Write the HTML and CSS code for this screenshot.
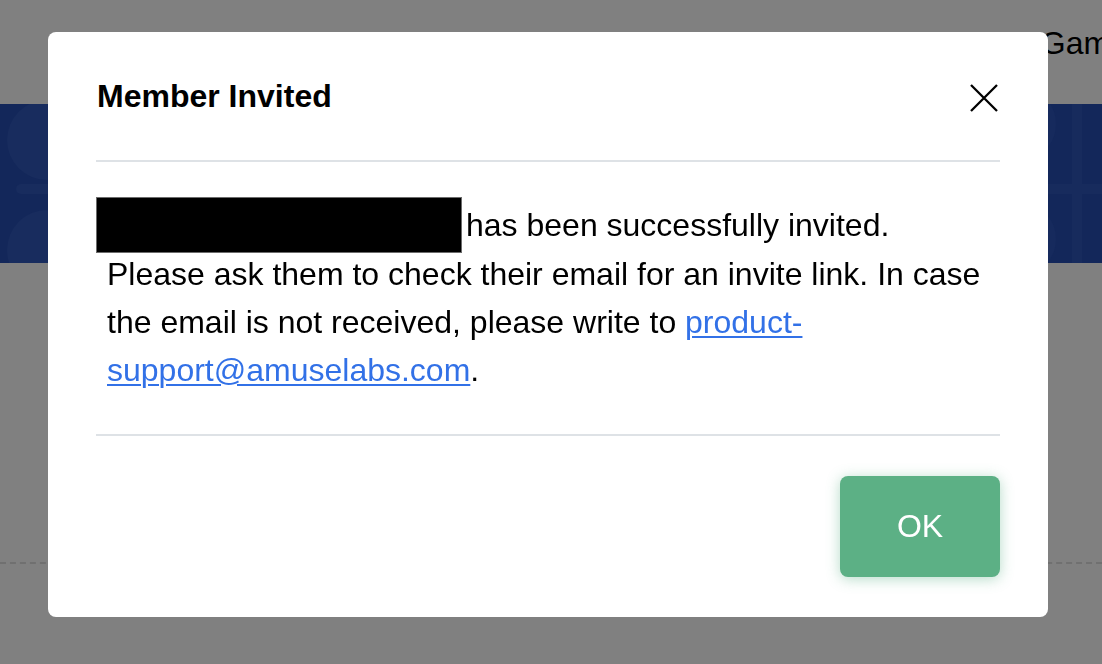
FILE: index.html
```html
<!DOCTYPE html>
<html lang="en">
<head>
<meta charset="utf-8">
<title>Member Invited</title>
<link rel="stylesheet" href="styles.css">
</head>
<body>
<div class="page">
  <div class="topnav">
    <span class="nav-item">Games</span>
  </div>
  <div class="banner">
    <span class="deco deco-c1"></span>
    <span class="deco deco-pill"></span>
    <span class="deco deco-c2"></span>
    <span class="deco deco-vbar"></span>
    <span class="deco deco-hbar"></span>
    <span class="deco deco-c3"></span>
    <span class="deco deco-c4"></span>
  </div>
  <div class="content">
    <div class="dashed"></div>
  </div>
</div>

<div class="backdrop">
  <div class="modal" role="dialog" aria-labelledby="modal-title">
    <div class="modal-header">
      <h2 class="modal-title" id="modal-title">Member Invited</h2>
      <button class="close-btn" aria-label="Close">
        <svg width="30" height="30" viewBox="0 0 30 30" aria-hidden="true">
          <path d="M2 2 L28 28 M28 2 L2 28" stroke="#000" stroke-width="2.3" stroke-linecap="butt" fill="none"/>
        </svg>
      </button>
    </div>
    <div class="modal-body">
      <div class="first-line">
        <span class="redacted"></span><span>has been successfully invited.</span>
      </div>
      <p class="message">Please ask them to check their email for an invite link. In case the email is not received, please write to <a href="#" class="mail-link">product-support@amuselabs.com</a>.</p>
    </div>
    <div class="modal-footer">
      <button class="ok-btn">OK</button>
    </div>
  </div>
</div>
</body>
</html>
```

FILE: styles.css
```css
html, body {
  margin: 0;
  padding: 0;
}

body {
  background: #808080;
  font-family: "Liberation Sans", Arial, Helvetica, sans-serif;
  color: #000;
  width: 1102px;
  height: 664px;
  overflow: hidden;
}

.page {
  display: flex;
  flex-direction: column;
}

.topnav {
  height: 104px;
  display: flex;
  justify-content: flex-end;
  white-space: nowrap;
}

.nav-item {
  font-size: 32px;
  line-height: 1;
  color: #000;
  margin-top: 27px;
  margin-right: -42px;
}

.banner {
  position: relative;
  height: 159px;
  background: #13275a;
  overflow: hidden;
}

.deco {
  position: absolute;
  background: #182c5e;
}

.deco-c1 {
  left: 7px;
  top: -4px;
  width: 80px;
  height: 80px;
  border-radius: 50%;
}

.deco-pill {
  left: 16px;
  top: 80px;
  width: 60px;
  height: 10px;
  border-radius: 5px;
}

.deco-c2 {
  left: 7px;
  top: 106px;
  width: 80px;
  height: 80px;
  border-radius: 50%;
}

.deco-vbar {
  left: 1072px;
  top: 0;
  width: 10px;
  height: 159px;
  background: #172b5d;
}

.deco-hbar {
  left: 1040px;
  top: 80px;
  width: 62px;
  height: 10px;
  background: #172b5d;
}

.deco-c3 {
  left: 1010px;
  top: -10px;
  width: 46px;
  height: 60px;
  border-radius: 50%;
  background: #162a5d;
}

.deco-c4 {
  left: 1010px;
  top: 105px;
  width: 46px;
  height: 60px;
  border-radius: 50%;
  background: #162a5d;
}

.content {
  height: 401px;
  padding-top: 299px;
  box-sizing: border-box;
}

.dashed {
  height: 0;
  border-top: 2px dashed #707070;
}

.backdrop {
  position: fixed;
  inset: 0;
  padding: 32px 0 0 48px;
}

.modal {
  width: 1000px;
  height: 585px;
  box-sizing: border-box;
  background: #fff;
  border-radius: 8px;
  padding: 0 48px;
  display: flex;
  flex-direction: column;
}

.modal-header {
  display: flex;
  align-items: center;
  justify-content: space-between;
  padding: 40px 0;
  border-bottom: 2px solid #dee2e6;
}

.modal-title {
  margin: 0;
  font-size: 32px;
  font-weight: 700;
  line-height: 48px;
  padding-left: 1px;
}

.close-btn {
  border: 0;
  background: none;
  padding: 0;
  width: 30px;
  height: 30px;
  margin-top: 4px;
  margin-right: 1px;
  display: flex;
  cursor: pointer;
}

.modal-body {
  padding: 35px 0 40px;
  font-size: 32px;
  line-height: 48px;
}

.first-line {
  display: flex;
  align-items: center;
  height: 56px;
  margin-bottom: -3px;
  white-space: nowrap;
}

.redacted {
  display: inline-block;
  width: 364px;
  height: 54px;
  background: #000;
  border: 1px solid #6c6c6c;
  margin-right: 4px;
  flex: none;
}

.message {
  margin: 0;
  padding-left: 11px;
}

.mail-link {
  color: #3271e7;
  text-decoration: underline;
  text-decoration-thickness: 2px;
  text-underline-offset: 3px;
}

.modal-footer {
  border-top: 2px solid #dee2e6;
  display: flex;
  justify-content: flex-end;
  padding: 40px 0;
}

.ok-btn {
  width: 160px;
  height: 101px;
  border: 0;
  border-radius: 8px;
  background: #5cb085;
  color: #fff;
  font-family: "Liberation Sans", Arial, Helvetica, sans-serif;
  font-size: 32px;
  box-shadow: 0 2px 14px rgba(92, 176, 133, 0.45);
  cursor: pointer;
}
```
